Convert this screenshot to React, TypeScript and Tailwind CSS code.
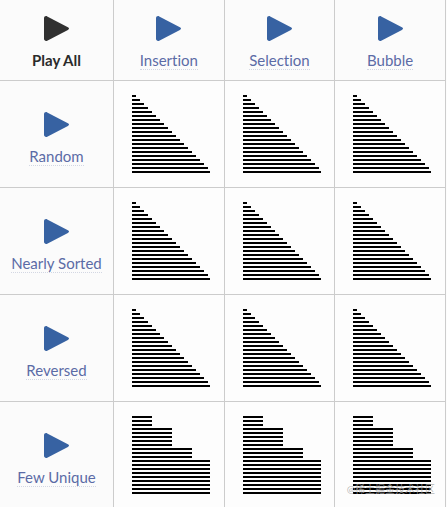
const algorithms = ["Insertion", "Selection", "Bubble"];

const ramp = Array.from({ length: 20 }, (_, i) => Math.min((i + 1) * 4, 78));
const steps = [
  ...Array<number>(3).fill(20),
  ...Array<number>(5).fill(40),
  ...Array<number>(3).fill(60),
  ...Array<number>(9).fill(78),
];

const conditions = [
  { name: "Random", bars: ramp },
  { name: "Nearly Sorted", bars: ramp },
  { name: "Reversed", bars: ramp },
  { name: "Few Unique", bars: steps },
];

function PlayButton({ label, primary = false }: { label: string; primary?: boolean }) {
  return (
    <button
      type="button"
      className={`mx-auto flex cursor-pointer flex-col items-center whitespace-nowrap ${
        primary ? "text-[#303030]" : "text-[#3762a2]"
      }`}
    >
      <svg viewBox="0 0 25 25" className="size-[25px]" fill="currentColor" aria-hidden="true">
        <path d="M0 2.2C0 .5 1.7-.4 3.2.4L23.9 11.3C25.4 12.1 25.4 13.2 23.9 14L3.2 24.7C1.7 25.4 0 24.5 0 22.8Z" />
      </svg>
      <span
        className={`mt-2.5 border-b text-[15px] leading-[18px] [font-variant-ligatures:none] ${
          primary
            ? "border-transparent font-bold text-[#2b2b2b]"
            : "border-dotted border-[#d3d7e3] font-normal text-[#5b6ba6]"
        }`}
      >
        {label}
      </span>
    </button>
  );
}

function Bars({ values, label }: { values: number[]; label: string }) {
  return (
    <div role="img" aria-label={label} className="flex flex-col gap-0.5 pl-[18px]">
      {values.map((value, i) => (
        <div key={i} className="h-0.5 bg-black" style={{ width: value }} />
      ))}
    </div>
  );
}

export default function App() {
  return (
    <main className="relative h-screen overflow-hidden bg-[#fdfdfd] pr-px font-['Lato','Noto_Sans_CJK_SC',sans-serif]">
      <table className="w-full table-fixed border-separate border-spacing-0">
        <thead>
          <tr className="h-[81px]">
            <th className="w-[114px] border-r border-b border-[#cccccc] bg-[#fbfbfb] p-0 pt-4 align-top">
              <PlayButton label="Play All" primary />
            </th>
            {algorithms.map((name) => (
              <th key={name} scope="col" className="border-r border-b border-[#cccccc] bg-[#fbfbfb] p-0 pt-4 align-top">
                <PlayButton label={name} />
              </th>
            ))}
          </tr>
        </thead>
        <tbody>
          {conditions.map(({ name, bars }) => (
            <tr key={name} className="h-[107px]">
              <th scope="row" className="border-r border-b border-[#cccccc] bg-[#fbfbfb] p-0 pt-[31px] align-top">
                <PlayButton label={name} />
              </th>
              {algorithms.map((algorithm) => (
                <td key={algorithm} className="border-r border-b border-[#cccccc] p-0 pt-3.5 align-top">
                  <Bars values={bars} label={`${algorithm} sort, ${name}`} />
                </td>
              ))}
            </tr>
          ))}
        </tbody>
      </table>
      <p className="absolute right-3 bottom-2.5 text-[10px] leading-4 text-[#a6a6a6]/80">@稀土掘金技术社区</p>
    </main>
  );
}
